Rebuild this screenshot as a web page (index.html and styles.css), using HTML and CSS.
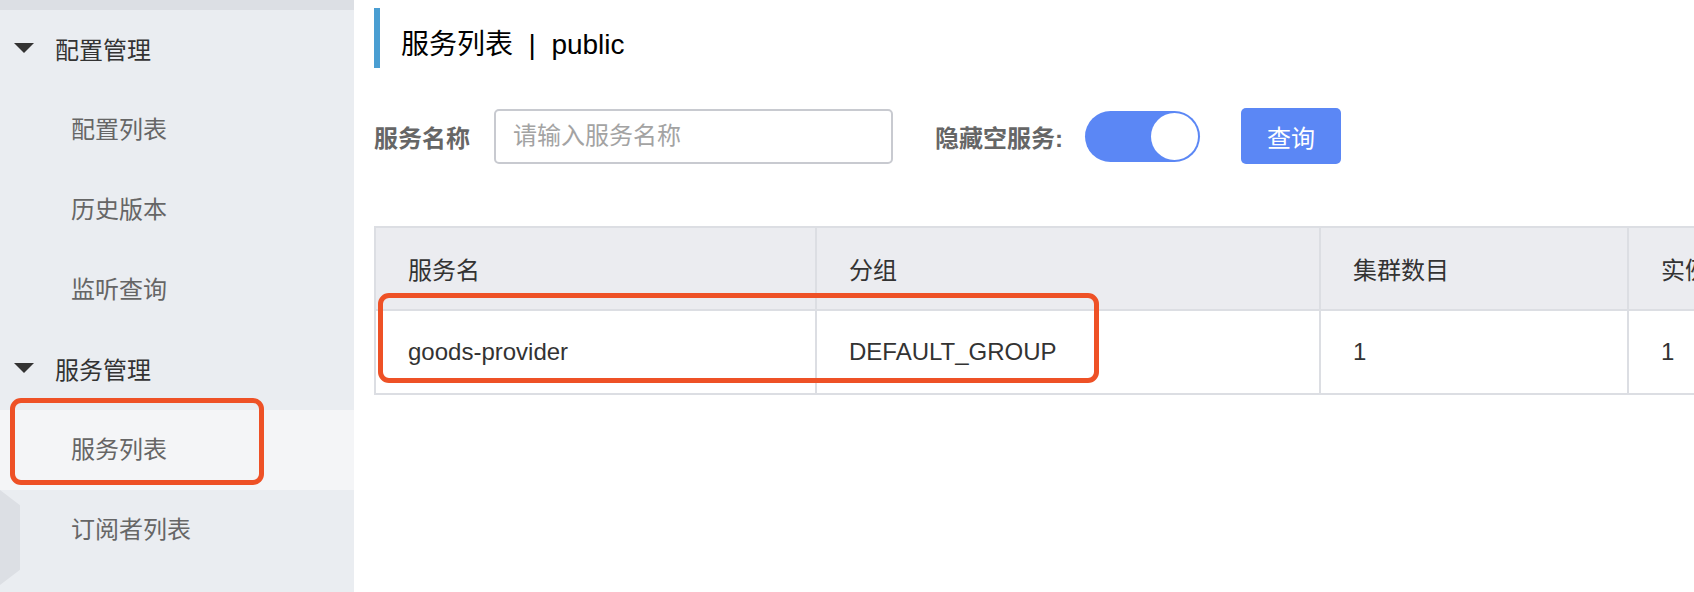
FILE: index.html
```html
<!DOCTYPE html>
<html lang="zh-CN">
<head>
<meta charset="utf-8">
<title>服务列表</title>
<link rel="stylesheet" href="styles.css">
</head>
<body>
<div class="app">
  <aside class="sidebar">
    <div class="sidebar-top"></div>
    <div class="group">
      <div class="group-title"><span class="caret"></span>配置管理</div>
      <div class="item">配置列表</div>
      <div class="item">历史版本</div>
      <div class="item">监听查询</div>
    </div>
    <div class="group">
      <div class="group-title"><span class="caret"></span>服务管理</div>
      <div class="item active">服务列表</div>
      <div class="item">订阅者列表</div>
    </div>
    <div class="collapse-handle"></div>
    <div class="mark mark-side"></div>
  </aside>
  <main class="main">
    <h1 class="title">服务列表 &nbsp;|&nbsp; public</h1>
    <div class="form-row">
      <label class="label">服务名称</label>
      <input class="input" type="text" placeholder="请输入服务名称">
      <label class="label label-hide">隐藏空服务:</label>
      <span class="switch"><span class="knob"></span></span>
      <button class="btn">查询</button>
    </div>
    <div class="table-wrap">
      <table class="table">
        <colgroup>
          <col class="c1"><col class="c2"><col class="c3"><col class="c4">
        </colgroup>
        <thead>
          <tr><th>服务名</th><th>分组</th><th>集群数目</th><th>实例数</th></tr>
        </thead>
        <tbody>
          <tr><td>goods-provider</td><td>DEFAULT_GROUP</td><td>1</td><td>1</td></tr>
        </tbody>
      </table>
      <div class="mark mark-table"></div>
    </div>
  </main>
</div>
</body>
</html>
```

FILE: styles.css
```css
html, body {
  margin: 0;
  padding: 0;
  background: #fff;
  font-family: "Liberation Sans", "Noto Sans CJK SC", sans-serif;
}
.app {
  display: flex;
  width: 1694px;
  height: 592px;
  overflow: hidden;
}
.sidebar {
  position: relative;
  flex: 0 0 354px;
  background: #eaedf1;
}
.sidebar-top {
  height: 10px;
  background: #dcdfe4;
}
.group-title {
  display: flex;
  align-items: center;
  height: 76px;
  margin-bottom: 4px;
  padding-left: 14px;
  font-size: 24px;
  color: #333;
}
.caret {
  width: 0;
  height: 0;
  border-left: 10px solid transparent;
  border-right: 10px solid transparent;
  border-top: 10px solid #333;
  margin-right: 21px;
}
.item {
  height: 80px;
  line-height: 80px;
  padding-left: 71px;
  font-size: 24px;
  color: #666;
}
.item.active {
  background: #f4f5f7;
}
.collapse-handle {
  position: absolute;
  left: 0;
  top: 490px;
  width: 20px;
  height: 95px;
  background: #dcdfe4;
  clip-path: polygon(0 0, 100% 16%, 100% 84%, 0 100%);
}
.mark {
  position: absolute;
  border: 5px solid #ee5126;
  border-radius: 11px;
  box-sizing: border-box;
}
.mark-side {
  left: 10px;
  top: 398px;
  width: 254px;
  height: 87px;
}
.main {
  flex: 1;
  min-width: 0;
  padding-left: 20px;
  overflow: hidden;
}
.title {
  margin: 8px 0 0;
  box-sizing: border-box;
  height: 60px;
  padding-top: 14px;
  padding-left: 21px;
  border-left: 6px solid #4a9ed2;
  font-size: 28px;
  line-height: 46px;
  font-weight: normal;
  color: #000;
}
.form-row {
  display: flex;
  align-items: center;
  margin-top: 40px;
  height: 56px;
}
.label {
  font-size: 24px;
  font-weight: bold;
  color: #666;
}
.input {
  box-sizing: border-box;
  width: 399px;
  height: 55px;
  margin-left: 24px;
  padding: 0 17px;
  border: 2px solid #c8cad0;
  border-radius: 5px;
  font-family: "Liberation Sans", "Noto Sans CJK SC", sans-serif;
  font-size: 24px;
  color: #333;
  outline: none;
}
.input::placeholder {
  color: #a3a3a3;
}
.label-hide {
  margin-left: 42px;
}
.switch {
  position: relative;
  box-sizing: border-box;
  width: 115px;
  height: 51px;
  margin-left: 22px;
  border-radius: 26px;
  background: #5b87f5;
}
.knob {
  position: absolute;
  right: 2px;
  top: 2px;
  width: 47px;
  height: 47px;
  border-radius: 50%;
  background: #fff;
}
.btn {
  width: 100px;
  height: 56px;
  margin-left: 41px;
  border: none;
  border-radius: 5px;
  background: #5b87f5;
  color: #fff;
  font-family: "Liberation Sans", "Noto Sans CJK SC", sans-serif;
  font-size: 24px;
}
.table-wrap {
  position: relative;
  margin-top: 62px;
  width: 1600px;
}
.table {
  border-collapse: collapse;
  table-layout: fixed;
  width: 1561px;
  border: 2px solid #dcdee3;
}
.c1 { width: 441px; }
.c2 { width: 504px; }
.c3 { width: 308px; }
.c4 { width: 308px; }
.table th, .table td {
  border: 2px solid #dcdee3;
  padding: 0 0 0 32px;
  text-align: left;
  font-size: 24px;
  font-weight: normal;
  color: #333;
  white-space: nowrap;
  overflow: hidden;
}
.table th {
  height: 81px;
  background: #ebecf0;
}
.table td {
  height: 82px;
  background: #fff;
}
.mark-table {
  left: 4px;
  top: 67px;
  width: 721px;
  height: 90px;
}
```
